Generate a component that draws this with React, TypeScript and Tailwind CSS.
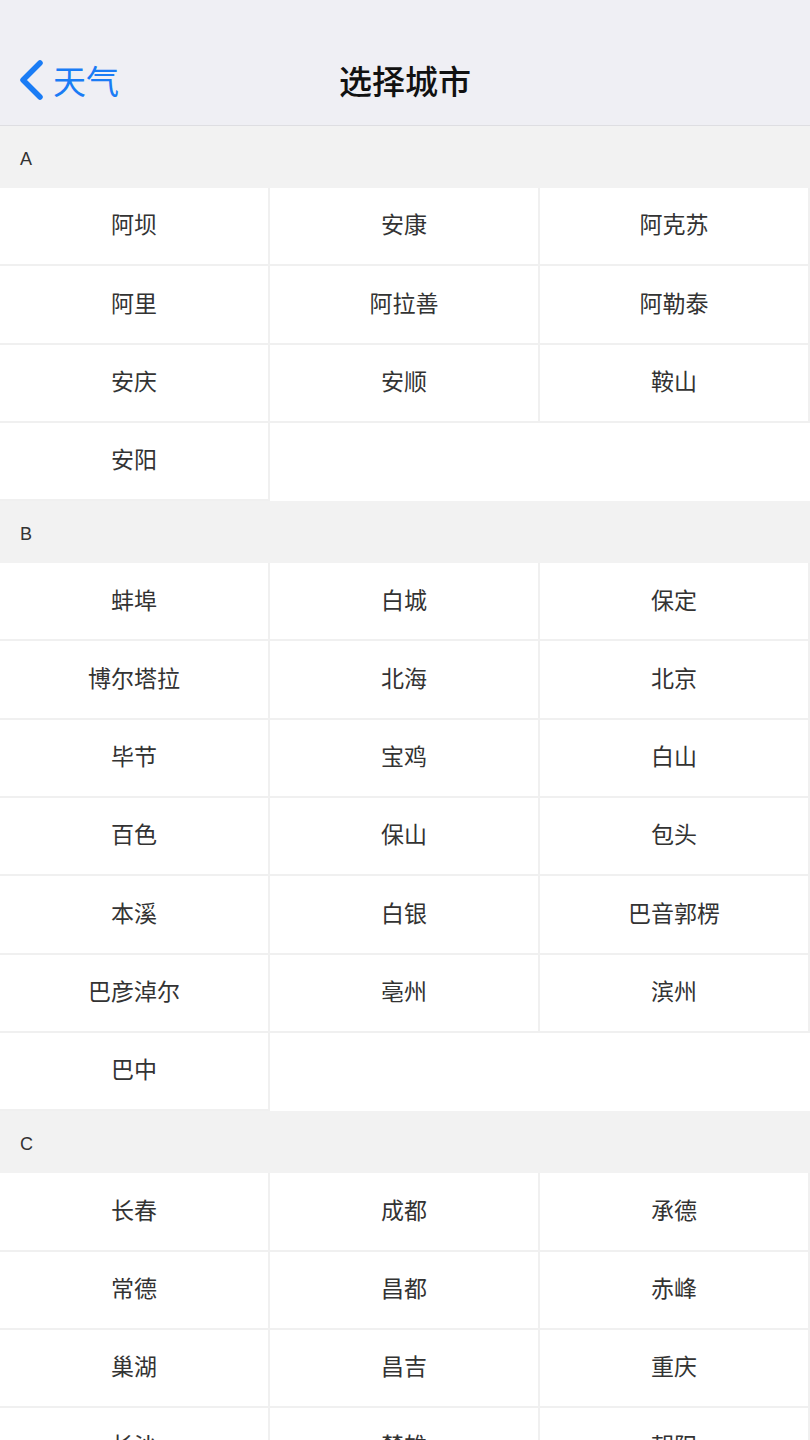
import React from 'react';

const sections: { letter: string; cities: string[] }[] = [
  { letter: 'A', cities: ['阿坝', '安康', '阿克苏', '阿里', '阿拉善', '阿勒泰', '安庆', '安顺', '鞍山', '安阳'] },
  {
    letter: 'B',
    cities: [
      '蚌埠', '白城', '保定', '博尔塔拉', '北海', '北京', '毕节', '宝鸡', '白山', '百色', '保山', '包头',
      '本溪', '白银', '巴音郭楞', '巴彦淖尔', '亳州', '滨州', '巴中',
    ],
  },
  { letter: 'C', cities: ['长春', '成都', '承德', '常德', '昌都', '赤峰', '巢湖', '昌吉', '重庆', '长沙', '楚雄', '朝阳'] },
];

const font = { fontFamily: '"Noto Sans CJK SC", "Liberation Sans", sans-serif' };

export default function App() {
  return (
    <div className="w-[810px] h-[1440px] overflow-hidden bg-white" style={font}>
      {/* nav bar */}
      <div className="h-[126px] bg-[#efeff4] border-b border-[#dedee2] flex items-end pb-[25px] relative">
        <div className="flex items-center pl-[16px] text-[#1a7cf5]">
          <svg width="30" height="40" viewBox="0 0 30 40" fill="none">
            <path d="M24 3 L7 20 L24 37" stroke="#1a7cf5" strokeWidth="5.5" strokeLinecap="round" strokeLinejoin="round" />
          </svg>
          <span className="text-[33px] leading-none ml-[7px]">天气</span>
        </div>
        <div className="absolute left-0 right-0 bottom-[25px] text-center text-[33px] leading-[40px] font-medium text-[#111]">
          选择城市
        </div>
      </div>

      {sections.map((s) => (
        <div key={s.letter}>
          <div
            className="h-[62px] bg-[#f2f2f2] flex items-center pl-[20px] pt-[4px] text-[18px] text-[#333]"
            style={{ fontFamily: '"Liberation Sans", sans-serif' }}
          >
            {s.letter}
          </div>
          <div className="grid grid-cols-3">
            {s.cities.map((c) => (
              <div
                key={c}
                className="h-[78.3px] flex items-center justify-center pb-[5px] border-r-2 border-b-2 border-[#f0f0f0] text-[23px] text-[#333]"
              >
                {c}
              </div>
            ))}
          </div>
        </div>
      ))}
    </div>
  );
}
